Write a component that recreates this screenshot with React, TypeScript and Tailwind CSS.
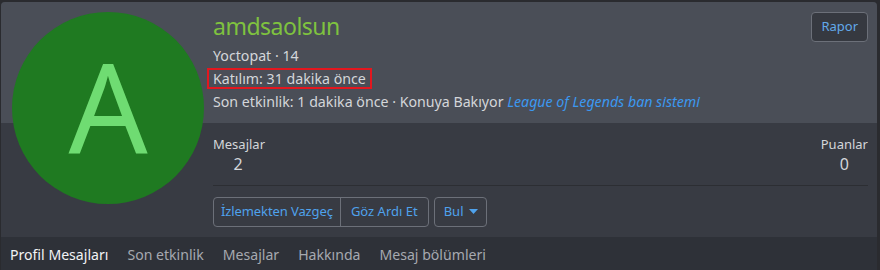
import { FC } from "react";

const tabs = ["Profil Mesajları", "Son etkinlik", "Mesajlar", "Hakkında", "Mesaj bölümleri"];

const App: FC = () => {
  return (
    <div
      className="w-[880px] h-[270px] bg-[#2a2b2f] pt-[2px] pl-px overflow-hidden"
      style={{ fontFamily: '"Noto Sans", "Open Sans", sans-serif' }}
    >
      <div className="w-[876px] h-[268px] flex flex-col rounded-t-[4px] overflow-hidden bg-[#383b43]">
        {/* top + stats share the avatar column */}
        <div className="relative flex">
          <div className="absolute left-[11px] top-[10px] w-[192px] h-[192px] rounded-full bg-[#1f7a21] flex items-center justify-center overflow-hidden">
            <span className="text-[#6fdc72] text-[124px] leading-none pb-[4px]">A</span>
          </div>
          <div className="flex-1 flex flex-col">
            <div className="h-[121px] bg-[#4a4e57] pl-[212px] pr-[9px] pt-[9px] flex justify-between">
              <div className="flex flex-col">
                <h1 className="text-[#7fc23f] text-[23px] leading-[30px] tracking-[-0.5px]">amdsaolsun</h1>
                <div className="text-[#d4d6da] text-[14.2px] mt-[5px] leading-[20px]">Yoctopat · 14</div>
                <div className="mt-[2px] -ml-[6px] self-start border-2 border-[#e3171f] px-[4px] leading-[17px] text-[14.2px] text-[#d4d6da]">
                  Katılım: 31 dakika önce
                </div>
                <div className="text-[14.2px] text-[#d4d6da] mt-[3px] leading-[20px]">
                  Son etkinlik: 1 dakika önce · Konuya Bakıyor{" "}
                  <span className="italic text-[#3c98f0]">League of Legends ban sistemi</span>
                </div>
              </div>
              <button className="self-start h-[30px] px-[9px] mt-[1px] rounded-[4px] border border-[#6c7079] bg-[#363940] text-[#62a9ea] text-[13px]">
                Rapor
              </button>
            </div>
            <div className="h-[114px] pl-[212px] pr-[9px] pt-[12px]">
              <div className="flex justify-between border-b border-[#2c2e33] pb-[10px]">
                <div className="flex flex-col items-start">
                  <span className="text-[13px] text-[#d4d6da] leading-[18px]">Mesajlar</span>
                  <span className="text-[16px] text-[#d4d6da] leading-[22px] w-[50px] text-center">2</span>
                </div>
                <div className="flex flex-col items-center">
                  <span className="text-[13px] text-[#d4d6da] leading-[18px]">Puanlar</span>
                  <span className="text-[16px] text-[#d4d6da] leading-[22px]">0</span>
                </div>
              </div>
              <div className="flex gap-[5px] mt-[11px]">
                <div className="flex h-[30px] rounded-[4px] border border-[#6c7079] text-[#4fa2ec] text-[13px]">
                  <button className="px-[7px] border-r border-[#6c7079] tracking-[-0.1px]">İzlemekten Vazgeç</button>
                  <button className="px-[10px]">Göz Ardı Et</button>
                </div>
                <button className="flex items-center gap-[5px] h-[30px] rounded-[4px] border border-[#6c7079] text-[#4fa2ec] text-[13px] pl-[9px] pr-[8px]">
                  Bul
                  <svg width="9" height="6" viewBox="0 0 9 6">
                    <path d="M0 0 H9 L4.5 5 Z" fill="#4fa2ec" />
                  </svg>
                </button>
              </div>
            </div>
          </div>
        </div>
        <div className="flex-1 bg-[#2e3138] flex items-center gap-[19px] pl-[9px] pt-[2px]">
          {tabs.map((t, i) => (
            <span
              key={t}
              className={`text-[14.1px] ${i === 0 ? "text-[#f2f3f5]" : "text-[#a6a9b0]"}`}
            >
              {t}
            </span>
          ))}
        </div>
      </div>
    </div>
  );
};

export default App;
